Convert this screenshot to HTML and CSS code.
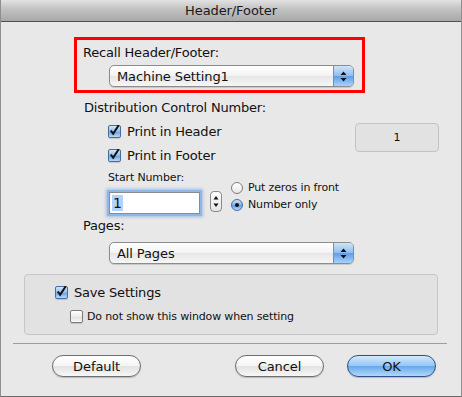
FILE: index.html
```html
<!DOCTYPE html>
<html>
<head>
    <meta charset="utf-8" />
    <link rel="stylesheet" href="styles.css">
    <title>Header/Footer</title>
</head>
<body>
    <div class="window">
        <div class="titlebar">Header/Footer</div>

        <div class="recall">
            <div class="label">Recall Header/Footer:</div>
            <div class="popup recall-popup">
                <span class="popup-text">Machine Setting1</span>
                <span class="popup-arrows">
                    <svg width="7" height="11" viewBox="0 0 7 11"><path d="M3.5 0.5 L6.5 4 L0.5 4 Z M3.5 10.5 L6.5 7 L0.5 7 Z" fill="#111"/></svg>
                </span>
            </div>
        </div>

        <div class="label dist-label">Distribution Control Number:</div>
        <div class="dist">
            <div class="checks">
                <div class="check-row">
                    <span class="checkbox checked">
                        <svg width="13" height="13" viewBox="0 0 13 13"><path d="M3 6.5 L5.6 10 L11.6 0.8" fill="none" stroke="#111" stroke-width="2.2"/></svg>
                    </span>
                    <span>Print in Header</span>
                </div>
                <div class="check-row second">
                    <span class="checkbox checked">
                        <svg width="13" height="13" viewBox="0 0 13 13"><path d="M3 6.5 L5.6 10 L11.6 0.8" fill="none" stroke="#111" stroke-width="2.2"/></svg>
                    </span>
                    <span>Print in Footer</span>
                </div>
            </div>
            <div class="preview">1</div>
        </div>

        <div class="start">
            <div class="start-col">
                <div class="small">Start Number:</div>
                <div class="field"><span class="sel">1</span></div>
            </div>
            <div class="stepper">
                <svg width="12" height="21" viewBox="0 0 12 21"><path d="M6 5 L8.5 8.5 L3.5 8.5 Z M6 16 L8.5 12.5 L3.5 12.5 Z" fill="#111"/></svg>
            </div>
            <div class="radios">
                <div class="radio-row"><span class="radio"></span><span>Put zeros in front</span></div>
                <div class="radio-row"><span class="radio on"><span class="dot"></span></span><span>Number only</span></div>
            </div>
        </div>

        <div class="label pages-label">Pages:</div>
        <div class="popup pages-popup">
            <span class="popup-text">All Pages</span>
            <span class="popup-arrows">
                <svg width="7" height="11" viewBox="0 0 7 11"><path d="M3.5 0.5 L6.5 4 L0.5 4 Z M3.5 10.5 L6.5 7 L0.5 7 Z" fill="#111"/></svg>
            </span>
        </div>

        <div class="group">
            <div class="check-row">
                <span class="checkbox checked">
                    <svg width="13" height="13" viewBox="0 0 13 13"><path d="M3 6.5 L5.6 10 L11.6 0.8" fill="none" stroke="#111" stroke-width="2.2"/></svg>
                </span>
                <span>Save Settings</span>
            </div>
            <div class="check-row small-row">
                <span class="checkbox"></span>
                <span class="small">Do not show this window when setting</span>
            </div>
        </div>

        <div class="separator"></div>

        <div class="buttons">
            <div class="button">Default</div>
            <div class="button cancel">Cancel</div>
            <div class="button ok">OK</div>
        </div>
    </div>
</body>
</html>
```

FILE: styles.css
```css
* {
    box-sizing: border-box;
}
body {
    margin: 0;
    font-family: "DejaVu Sans", sans-serif;
    font-size: 13px;
    color: #111;
}
.window {
    width: 462px;
    height: 397px;
    background: #e8e8e8;
    border-left: 1px solid #8f8f8f;
    border-right: 1px solid #8f8f8f;
    border-bottom: 1px solid #6a6a6a;
    display: flex;
    flex-direction: column;
    overflow: hidden;
}
.titlebar {
    height: 22px;
    margin: 0 -1px;
    border-bottom: 1px solid #505050;
    background: linear-gradient(#e2e2e2, #c4c4c4 40%, #a8a8a8);
    text-align: center;
    line-height: 21px;
    color: #1a1a1a;
    letter-spacing: -0.1px;
}
.label {
    line-height: 16px;
    letter-spacing: -0.2px;
}
.small {
    font-size: 11px;
    line-height: 13px;
    letter-spacing: -0.15px;
}

/* recall box */
.recall {
    margin: 15px 0 0 73px;
    width: 291px;
    border: 3px solid #ff0000;
    padding: 5px 0 3px 6px;
}
.recall-popup {
    margin: 4px 0 0 26px;
}
.popup {
    width: 245px;
    height: 22px;
    border: 1px solid #8c8c8c;
    border-radius: 5px;
    background: linear-gradient(#ffffff, #f3f3f3 50%, #e6e6e6 51%, #f6f6f6);
    display: flex;
    align-items: center;
    box-shadow: 0 1px 1px rgba(0,0,0,0.15);
    overflow: hidden;
}
.popup-text {
    flex: 1;
    padding-left: 7px;
    letter-spacing: -0.1px;
}
.popup-arrows {
    width: 20px;
    height: 100%;
    border-left: 1px solid #6f8fbf;
    background: linear-gradient(#cfe4fa, #8dbdf0 50%, #5c9ee8 51%, #a9d2fb);
    display: flex;
    align-items: center;
    justify-content: center;
}

/* distribution */
.dist-label {
    margin: 7px 0 0 83px;
}
.dist {
    display: flex;
    align-items: flex-start;
    margin-top: 6px;
}
.checks {
    margin-left: 107px;
}
.check-row {
    height: 18px;
    display: flex;
    align-items: center;
    gap: 6px;
    letter-spacing: -0.2px;
}
.check-row.second {
    margin-top: 6px;
}
.checkbox {
    width: 13px;
    height: 13px;
    border: 1px solid #7d7d7d;
    border-radius: 2px;
    background: linear-gradient(#ffffff, #ececec 50%, #dedede 51%, #f8f8f8);
    box-shadow: 0 1px 1px rgba(0,0,0,0.15);
    flex: none;
    display: flex;
    overflow: visible;
}
.checkbox.checked {
    border-color: #4a6d9e;
    background: linear-gradient(#d2e6fa, #8cbcee 50%, #5f9fe6 51%, #b7dafc);
}
.checkbox svg {
    margin: -2px 0 0 -1px;
}
.preview {
    margin: 1px 22px 0 auto;
    width: 84px;
    height: 29px;
    border: 1px solid #c3c3c3;
    border-radius: 4px;
    background: #e2e2e2;
    font-size: 11px;
    display: flex;
    align-items: center;
    justify-content: center;
}

/* start number */
.start {
    display: flex;
    align-items: flex-start;
    margin-top: 7px;
}
.start-col {
    margin-left: 107px;
}
.field {
    margin: 8px 0 0 1px;
    width: 91px;
    height: 22px;
    border: 1px solid #8c8c8c;
    background: #fff;
    box-shadow: 0 0 0 2px #8fb6e8, 0 0 3px 3px rgba(100,150,220,0.5);
    padding: 2px 0 0 2px;
    line-height: 16px;
    font-size: 14px;
}
.sel {
    background: #b3d3fa;
    padding: 0 1px;
}
.stepper {
    margin: 20px 0 0 10px;
    width: 12px;
    height: 21px;
    border: 1px solid #8a8a8a;
    border-radius: 4px;
    background: linear-gradient(#fdfdfd, #e4e4e4);
    display: flex;
    align-items: center;
    justify-content: center;
}
.stepper svg {
    flex: none;
}
.radios {
    margin: 8px 0 0 9px;
}
.radio-row {
    height: 17px;
    display: flex;
    align-items: center;
    gap: 5px;
    font-size: 11px;
    letter-spacing: -0.15px;
}
.radio {
    width: 12px;
    height: 12px;
    border: 1px solid #7d7d7d;
    border-radius: 50%;
    background: linear-gradient(#ffffff, #e6e6e6);
    flex: none;
    display: flex;
    align-items: center;
    justify-content: center;
}
.radio.on {
    border-color: #4a6d9e;
    background: linear-gradient(#d2e6fa, #7eb4ee 50%, #5a9ce6 51%, #b7dafc);
}
.dot {
    width: 4px;
    height: 4px;
    border-radius: 50%;
    background: #111;
}

/* pages */
.pages-label {
    margin: 4px 0 0 82px;
}
.pages-popup {
    margin: 8px 0 0 108px;
}

/* group */
.group {
    margin: 10px 0 0 23px;
    width: 414px;
    height: 61px;
    border: 1px solid #c6c6c6;
    border-radius: 4px;
    background: #e2e2e2;
    padding: 8px 0 0 30px;
}
.small-row {
    margin: 6px 0 0 15px;
    gap: 4px;
}

.separator {
    margin: 8px 0 0 12px;
    width: 434px;
    height: 1px;
    background: #9c9c9c;
}

/* buttons */
.buttons {
    display: flex;
    margin: 11px 25px 0 51px;
}
.button {
    width: 89px;
    height: 22px;
    border: 1px solid #6e6e6e;
    border-radius: 11px;
    background: linear-gradient(#ffffff, #f4f4f4 50%, #e2e2e2 51%, #f7f7f7);
    box-shadow: 0 1px 1px rgba(0,0,0,0.2);
    display: flex;
    align-items: center;
    justify-content: center;
    letter-spacing: -0.1px;
}
.cancel {
    margin-left: auto;
}
.ok {
    margin-left: 23px;
    border-color: #2f4f8a;
    background: linear-gradient(#d4e8fb, #95c5f2 50%, #66a8ec 51%, #b1d9fb);
}
```
